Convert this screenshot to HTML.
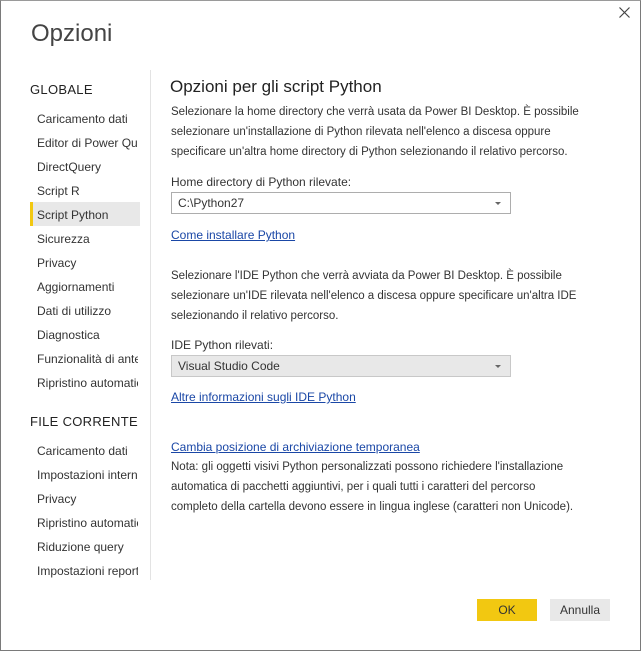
<!DOCTYPE html>
<html><head><style>
*{margin:0;padding:0;box-sizing:border-box}
body{width:641px;height:651px;background:#fff;font-family:"Liberation Sans",sans-serif;color:#333;position:relative;overflow:hidden}
.frame{position:absolute;left:0;top:0;width:641px;height:651px;border:1px solid #7a7a7a;border-top-color:#9a9a9a}
.a{position:absolute;white-space:nowrap}
.nav{position:absolute;left:37px;font-size:12px;color:#333;width:101px;overflow:hidden;white-space:nowrap;line-height:16px}
.h{font-size:13px;color:#222;letter-spacing:.3px}
p.t{position:absolute;left:171px;font-size:11.5px;line-height:20px;color:#333;white-space:nowrap}
a{color:#1a47a6;text-decoration:underline}
.sel{position:absolute;border:1px solid #adadad;height:22px;font-size:12px;padding:3px 0 0 6px}
.arr{position:absolute;right:9px;top:9px;width:0;height:0;border-left:3px solid transparent;border-right:3px solid transparent;border-top:3px solid #666}
</style></head><body>
<div class="frame"></div>
<div class="a" style="left:31px;top:20px;font-size:24px;color:#444">Opzioni</div>
<svg class="a" style="left:619px;top:7px" width="11" height="11"><path d="M0.5 0.5L10.5 10.5M10.5 0.5L0.5 10.5" stroke="#444" stroke-width="1.2"/></svg>
<div class="a" style="left:150px;top:70px;width:1px;height:510px;background:#e3e3e3"></div>
<div class="a h" style="left:30px;top:82px">GLOBALE</div>
<div style="position:absolute;left:30px;top:202px;width:110px;height:24px;background:#e8e8e8;border-left:3px solid #f2c811"></div>
<div class="nav" style="top:111px">Caricamento dati</div>
<div class="nav" style="top:135px">Editor di Power Query</div>
<div class="nav" style="top:159px">DirectQuery</div>
<div class="nav" style="top:183px">Script R</div>
<div class="nav" style="top:207px">Script Python</div>
<div class="nav" style="top:231px">Sicurezza</div>
<div class="nav" style="top:255px">Privacy</div>
<div class="nav" style="top:279px">Aggiornamenti</div>
<div class="nav" style="top:303px">Dati di utilizzo</div>
<div class="nav" style="top:327px">Diagnostica</div>
<div class="nav" style="top:351px">Funzionalità di anteprima</div>
<div class="nav" style="top:375px">Ripristino automatico</div>
<div class="a h" style="left:30px;top:414px">FILE CORRENTE</div>
<div class="nav" style="top:443px">Caricamento dati</div>
<div class="nav" style="top:467px">Impostazioni internazionali</div>
<div class="nav" style="top:491px">Privacy</div>
<div class="nav" style="top:515px">Ripristino automatico</div>
<div class="nav" style="top:539px">Riduzione query</div>
<div class="nav" style="top:563px">Impostazioni report</div>

<div class="a" style="left:170px;top:77px;font-size:17px;color:#222">Opzioni per gli script Python</div>
<p class="t" style="top:102px">Selezionare la home directory che verrà usata da Power BI Desktop. È possibile<br>selezionare un'installazione di Python rilevata nell'elenco a discesa oppure<br>specificare un'altra home directory di Python selezionando il relativo percorso.</p>
<div class="a" style="left:171px;top:175px;font-size:12px">Home directory di Python rilevate:</div>
<div class="sel" style="left:171px;top:192px;width:340px;background:#fff">C:\Python27<div class="arr"></div></div>
<div class="a" style="left:171px;top:228px;font-size:12px"><a>Come installare Python</a></div>
<p class="t" style="top:266px">Selezionare l'IDE Python che verrà avviata da Power BI Desktop. È possibile<br>selezionare un'IDE rilevata nell'elenco a discesa oppure specificare un'altra IDE<br>selezionando il relativo percorso.</p>
<div class="a" style="left:171px;top:338px;font-size:12px">IDE Python rilevati:</div>
<div class="sel" style="left:171px;top:355px;width:340px;background:#e8e8e8;border-color:#c8c8c8">Visual Studio Code<div class="arr"></div></div>
<div class="a" style="left:171px;top:390px;font-size:12px"><a>Altre informazioni sugli IDE Python</a></div>
<div class="a" style="left:171px;top:440px;font-size:12px"><a>Cambia posizione di archiviazione temporanea</a></div>
<p class="t" style="top:457px">Nota: gli oggetti visivi Python personalizzati possono richiedere l'installazione<br>automatica di pacchetti aggiuntivi, per i quali tutti i caratteri del percorso<br>completo della cartella devono essere in lingua inglese (caratteri non Unicode).</p>

<div class="a" style="left:477px;top:599px;width:60px;height:22px;background:#f2c811;font-size:12px;text-align:center;line-height:22px;color:#333">OK</div>
<div class="a" style="left:550px;top:599px;width:60px;height:22px;background:#e8e8e8;font-size:12px;text-align:center;line-height:22px;color:#333">Annulla</div>
</body></html>
